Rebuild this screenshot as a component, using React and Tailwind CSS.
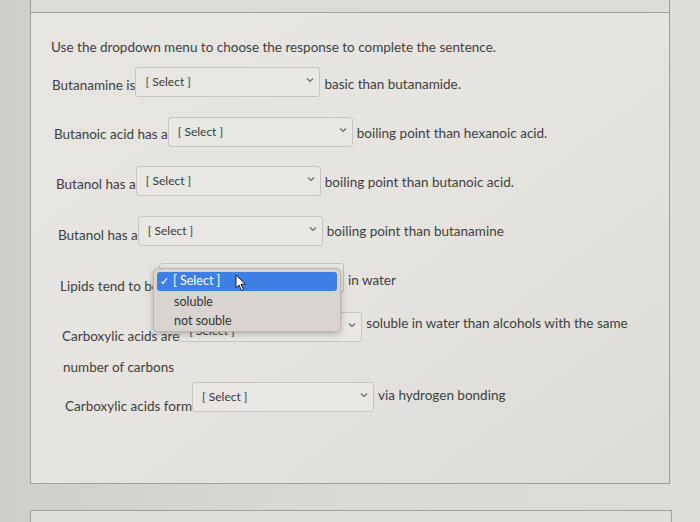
import React from "react";

const font = { fontFamily: "Lato, 'Open Sans', sans-serif" };

function Chevron() {
  return (
    <svg width="8" height="6" viewBox="0 0 8 6">
      <path d="M1 1.5 L4 4.5 L7 1.5" stroke="#6b6b6b" strokeWidth="1.2" fill="none" />
    </svg>
  );
}

function Select({ className = "w-[185px]", textClass = "" }) {
  return (
    <div
      className={
        "relative flex h-[30px] shrink-0 items-center rounded-[3px] border border-[#c6c5c1] bg-[#e8e7e3] pl-[9px] pb-[1px] " +
        className
      }
    >
      <span className={"text-[12px] text-[#3b3b3b] " + textClass}>[ Select ]</span>
      <span className="absolute right-[5px] top-[9px] flex">
        <Chevron />
      </span>
    </div>
  );
}

function Row({
  className,
  label,
  after,
  selectClass,
  selectTextClass,
  labelClass = "translate-y-[3px]",
  afterClass = "translate-y-[1px]",
}) {
  return (
    <div className={"flex items-center text-[13.5px] text-[#3f3f3f] " + className}>
      <span className={"whitespace-nowrap " + labelClass}>{label}</span>
      <Select className={selectClass} textClass={selectTextClass} />
      <span className={"ml-[4px] whitespace-nowrap " + afterClass}>{after}</span>
    </div>
  );
}

function Cursor() {
  return (
    <svg width="12" height="18" viewBox="0 0 12 18">
      <path
        d="M1 1 L1 14 L4 11 L6.5 16.5 L8.5 15.6 L6 10.3 L10.5 10.3 Z"
        fill="#ffffff"
        stroke="#222"
        strokeWidth="1"
        strokeLinejoin="round"
      />
    </svg>
  );
}

export default function App() {
  return (
    <div
      className="relative h-[522px] w-[700px] overflow-hidden bg-linear-to-r from-[#cfcecb] via-[#dad9d5] to-[#dedcd8]"
      style={font}
    >
      <div className="ml-[30px] h-[484px] w-[640px] border-x border-b border-[#9e9d99] bg-linear-to-br from-[#e6e5e1] via-[#e5e4e0] to-[#dcdbd7]">
        <div className="h-[13px] border-b border-[#a09f9b] bg-[#dcdbd7]" />
        <div className="relative pt-[25px]">
          <div className="ml-[20px] text-[13.5px] leading-[18px] text-[#3f3f3f]">
            Use the dropdown menu to choose the response to complete the sentence.
          </div>
          <Row
            className="ml-[21px] mt-[11px]"
            label="Butanamine is"
            after="basic than butanamide."
            afterClass="translate-y-[2px]"
          />
          <Row
            className="ml-[23px] mt-[20px]"
            label="Butanoic acid has a"
            after="boiling point than hexanoic acid."
            labelClass="translate-y-[2px]"
          />
          <Row
            className="ml-[25px] mt-[19px]"
            label="Butanol has a"
            after="boiling point than butanoic acid."
          />
          <Row
            className="ml-[27px] mt-[20px]"
            label="Butanol has a"
            after="boiling point than butanamine"
            labelClass="translate-y-[4px]"
            afterClass="translate-y-0"
          />
          <Row
            className="ml-[29px] mt-[17px]"
            label="Lipids tend to be"
            after="in water"
            selectClass="w-[185px]"
            labelClass="translate-y-[8px]"
            afterClass="translate-y-[2px]"
          />
          <Row
            className="ml-[31px] mt-[19px]"
            label="Carboxylic acids are"
            after="soluble in water than alcohols with the same"
            selectClass="w-[183px]"
            selectTextClass="translate-y-[4px]"
            labelClass="translate-y-[9px]"
            afterClass="-translate-y-[4px]"
          />
          <div className="ml-[32px] mt-[16px] text-[13.5px] leading-[18px] text-[#3f3f3f]">
            number of carbons
          </div>
          <Row
            className="ml-[34px] mt-[6px]"
            label="Carboxylic acids form"
            after="via hydrogen bonding"
            selectClass="w-[182px]"
            labelClass="translate-y-[9px]"
            afterClass="-translate-y-[2px]"
          />

          {/* open dropdown menu */}
          <div className="absolute left-[122px] top-[255px] w-[188px] rounded-[5px] border border-[#bcb6b2] bg-[#dad4d0] px-[3px] pt-[3px] pb-[2px] text-[12.5px] text-[#333] shadow-[0_2px_6px_rgba(0,0,0,0.25)]">
            <div className="flex h-[19px] items-center rounded-[3px] bg-[#3d7fe4] pl-[3px] text-white">
              <span className="w-[13px] text-[11px]">✓</span>
              <span>[ Select ]</span>
            </div>
            <div className="flex h-[19px] items-center pl-[17px] pt-[3px]">soluble</div>
            <div className="flex h-[19px] items-center pl-[17px] pt-[3px]">not souble</div>
          </div>
          <div className="absolute left-[204px] top-[261px]">
            <Cursor />
          </div>
        </div>
      </div>
      <div className="ml-[30px] mt-[26px] h-[20px] w-[642px] border-x border-t border-[#a3a29e] bg-[#dfdeda]" />
    </div>
  );
}
